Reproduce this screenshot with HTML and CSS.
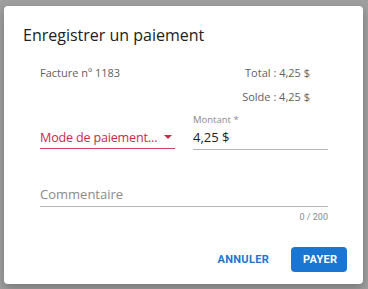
FILE: index.html
```html
<!DOCTYPE html>
<html lang="fr">
<head>
<meta charset="utf-8">
<link rel="stylesheet" href="styles.css">
</head>
<body>
<div class="dialog">
  <h2 class="title">Enregistrer un paiement</h2>
  <div class="content">
    <div class="info">
      <div class="invoice">Facture nº 1183</div>
      <div class="totals">
        <div>Total : 4,25 $</div>
        <div>Solde : 4,25 $</div>
      </div>
    </div>
    <div class="row">
      <div class="field select">
        <div class="select-value">
          <span class="select-text">Mode de paiement…</span>
          <span class="arrow"></span>
        </div>
      </div>
      <div class="field amount">
        <div class="label">Montant *</div>
        <div class="value">4,25 $</div>
      </div>
    </div>
    <div class="field comment">
      <div class="placeholder">Commentaire</div>
    </div>
    <div class="counter">0 / 200</div>
  </div>
  <div class="actions">
    <button class="btn text">ANNULER</button>
    <button class="btn primary">PAYER</button>
  </div>
</div>
</body>
</html>
```
FILE: styles.css
```css
html, body {
  margin: 0;
  height: 100%;
}
body {
  background: #9f9f9f;
  padding: 6px 5px 4px 4px;
  box-sizing: border-box;
  font-family: "Open Sans", "DejaVu Sans", sans-serif;
}
.dialog {
  background: #fff;
  border-radius: 4px;
  box-shadow: 0 4px 10px rgba(0,0,0,0.25);
  height: 278px;
  box-sizing: border-box;
  display: flex;
  flex-direction: column;
}
.title {
  margin: 0;
  padding: 17px 19px 0;
  font-size: 16px;
  font-weight: 400;
  color: #212121;
  line-height: 24px;
}
.content {
  padding: 0 35px 0 36px;
  margin-top: 19px;
}
.info {
  display: flex;
  justify-content: space-between;
  font-size: 11px;
  color: #616161;
  line-height: 14px;
  padding-right: 18px;
}
.totals {
  display: flex;
  flex-direction: column;
  align-items: flex-end;
  gap: 10px;
}
.row {
  display: flex;
  gap: 18px;
  margin-top: 7px;
}
.field {
  flex: 1;
  min-width: 0;
}
.select {
  border-bottom: 1px solid #d5425f;
  padding-top: 15px;
  align-self: flex-start;
}
.select-value {
  display: flex;
  align-items: center;
  justify-content: space-between;
  height: 22px;
  color: #c62a4a;
  font-size: 12.6px;
}
.select-text {
  white-space: nowrap;
  letter-spacing: -0.2px;
}
.arrow {
  flex: none;
  width: 0;
  height: 0;
  border-left: 4px solid transparent;
  border-right: 4px solid transparent;
  border-top: 4px solid #c62a4a;
  margin-right: 3px;
}
.amount {
  border-bottom: 1px solid #b5b5b5;
}
.label {
  font-size: 9.5px;
  color: #8a8a8a;
  line-height: 12px;
  margin-top: 3px;
}
.value {
  font-size: 13px;
  color: #212121;
  line-height: 22px;
  height: 23px;
}
.comment {
  margin-top: 33px;
  border-bottom: 1px solid #b5b5b5;
}
.placeholder {
  font-size: 13px;
  color: #8a8a8a;
  line-height: 22px;
  height: 23px;
}
.counter {
  text-align: right;
  font-family: Roboto, sans-serif;
  font-size: 9px;
  color: #8a8a8a;
  margin-top: 4px;
  line-height: 12px;
}
.actions {
  display: flex;
  justify-content: flex-end;
  gap: 10px;
  padding: 0 16px 12px;
  margin-top: auto;
}
.btn {
  font-family: Roboto, sans-serif;
  font-weight: 700;
  font-size: 11px;
  letter-spacing: 0.3px;
  border: none;
  border-radius: 4px;
  height: 25px;
  padding: 0 12px;
  cursor: pointer;
}
.btn.text {
  background: transparent;
  color: #1976d2;
}
.btn.primary {
  background: #1976d2;
  color: #fff;
  width: 56px;
}
```
